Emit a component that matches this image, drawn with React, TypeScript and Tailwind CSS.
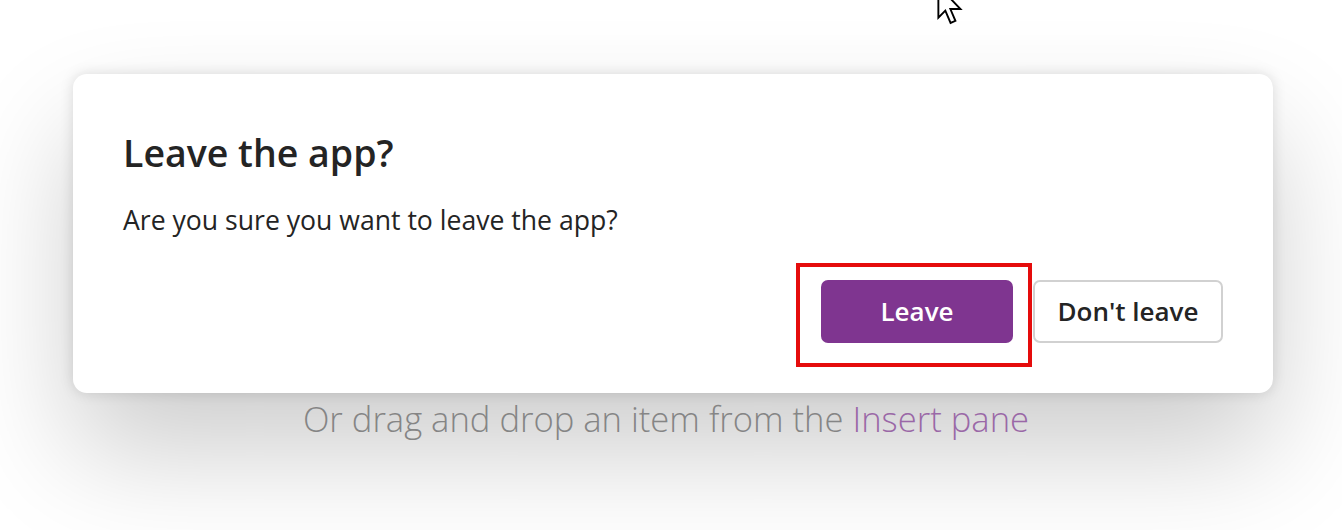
import React from 'react';

function Cursor() {
  return (
    <svg
      className="absolute left-[937px] top-[-15px]"
      width="28"
      height="40"
      viewBox="0 0 13 19"
    >
      <path
        d="M0.5 0.5 L0.5 15.5 L3.8 12.2 L6.3 18 L8.6 17 L6.2 11.4 L11 11.4 Z"
        fill="#ffffff"
        stroke="#000000"
        strokeWidth="0.9"
        strokeLinejoin="miter"
      />
    </svg>
  );
}

export default function App() {
  return (
    <div className="relative h-[530px] w-full overflow-hidden bg-white font-['Open_Sans',sans-serif]">
      <div className="flex flex-col pt-[74px]">
        <div className="relative z-10 ml-[73px] w-[1200px] rounded-[14px] bg-white px-[50px] pt-[54px] pb-[50px] shadow-[0_0_14px_rgba(0,0,0,0.13),0_58px_115px_rgba(0,0,0,0.2)]">
          <h1 className="text-[37.5px] leading-[50px] font-semibold text-[#242424]">Leave the app?</h1>
          <p className="mt-[24px] text-[26.6px] leading-[36px] text-[#242424]">
            Are you sure you want to leave the app?
          </p>
          <div className="mt-[42px] flex justify-end gap-[20px]">
            <button className="h-[63px] w-[192px] rounded-[7px] bg-[#7f3590] text-[26px] font-semibold text-white">
              Leave
            </button>
            <button className="h-[63px] w-[190px] rounded-[7px] border-2 border-[#d1d1d1] bg-white text-[26px] font-semibold text-[#242424]">
              Don't leave
            </button>
          </div>
        </div>
        <p className="relative z-20 mt-[3px] pr-[10px] text-center text-[34.6px] leading-[46px] font-light text-[#858585]">
          Or drag and drop an item from the <span className="text-[#9a68a7]">Insert pane</span>
        </p>
      </div>
      <div className="pointer-events-none absolute left-[796px] top-[263px] z-30 h-[104px] w-[236px] border-4 border-[#e50c0c]" />
      <Cursor />
    </div>
  );
}
